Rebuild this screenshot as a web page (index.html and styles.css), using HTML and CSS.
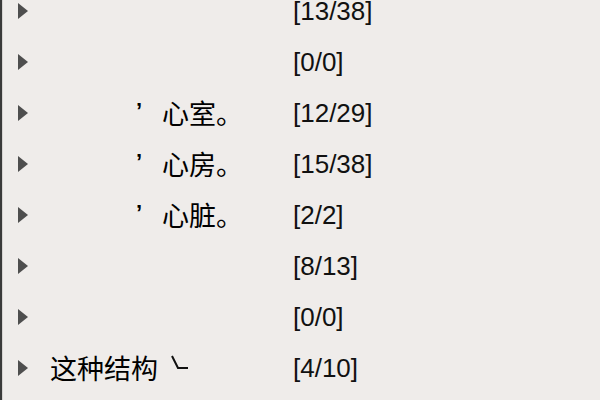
FILE: index.html
```html
<!DOCTYPE html>
<html>
<head>
<meta charset="utf-8">
<link rel="stylesheet" href="styles.css">
</head>
<body>
<div class="panel">
  <div class="list">
    <div class="row"><span class="arrow"></span><span class="name"></span><span class="count">[13/38]</span></div>
    <div class="row"><span class="arrow"></span><span class="name"></span><span class="count">[0/0]</span></div>
    <div class="row"><span class="arrow"></span><span class="name sub"><span class="tick">’</span>心室。</span><span class="count">[12/29]</span></div>
    <div class="row"><span class="arrow"></span><span class="name sub"><span class="tick">’</span>心房。</span><span class="count">[15/38]</span></div>
    <div class="row"><span class="arrow"></span><span class="name sub"><span class="tick">’</span>心脏。</span><span class="count">[2/2]</span></div>
    <div class="row"><span class="arrow"></span><span class="name"></span><span class="count">[8/13]</span></div>
    <div class="row"><span class="arrow"></span><span class="name"></span><span class="count">[0/0]</span></div>
    <div class="row"><span class="arrow"></span><span class="name">这种结构<svg class="hook" width="20" height="16" viewBox="0 0 20 16"><path d="M2 1 L8 13 L18 13" fill="none" stroke="#111" stroke-width="2"/></svg></span><span class="count">[4/10]</span></div>
  </div>
</div>
</body>
</html>
```

FILE: styles.css
```css
html, body {
  margin: 0;
  padding: 0;
}
body {
  width: 600px;
  height: 400px;
  overflow: hidden;
  background: #efecea;
}
.panel {
  height: 400px;
  border-left: 2px solid #3a3a3a;
  box-shadow: inset 1px 0 0 #d6d4d2;
  overflow: hidden;
}
.list {
  margin-top: -15px;
}
.row {
  display: grid;
  grid-template-columns: 16px 10px 22px 243px auto;
  grid-template-areas: ". arrow . name count";
  height: 51px;
  align-items: center;
  color: #111;
}
.arrow {
  grid-area: arrow;
  width: 0;
  height: 0;
  border-left: 10px solid #4e4e4e;
  border-top: 8px solid transparent;
  border-bottom: 8px solid transparent;
}
.name {
  grid-area: name;
  display: flex;
  align-items: center;
  font-family: "Noto Sans CJK SC", sans-serif;
  font-size: 27px;
  line-height: 1;
  white-space: nowrap;
  color: #000;
}
.name.sub {
  padding-left: 86px;
}
.tick {
  display: inline-block;
  width: 26px;
  font-family: "Liberation Sans", sans-serif;
  font-weight: bold;
  font-size: 22px;
  align-self: flex-start;
  margin-top: 1px;
}
.hook {
  margin-left: 12px;
  margin-top: -10px;
}
.count {
  grid-area: count;
  font-family: "Liberation Sans", sans-serif;
  font-size: 26px;
  line-height: 1;
}
```
